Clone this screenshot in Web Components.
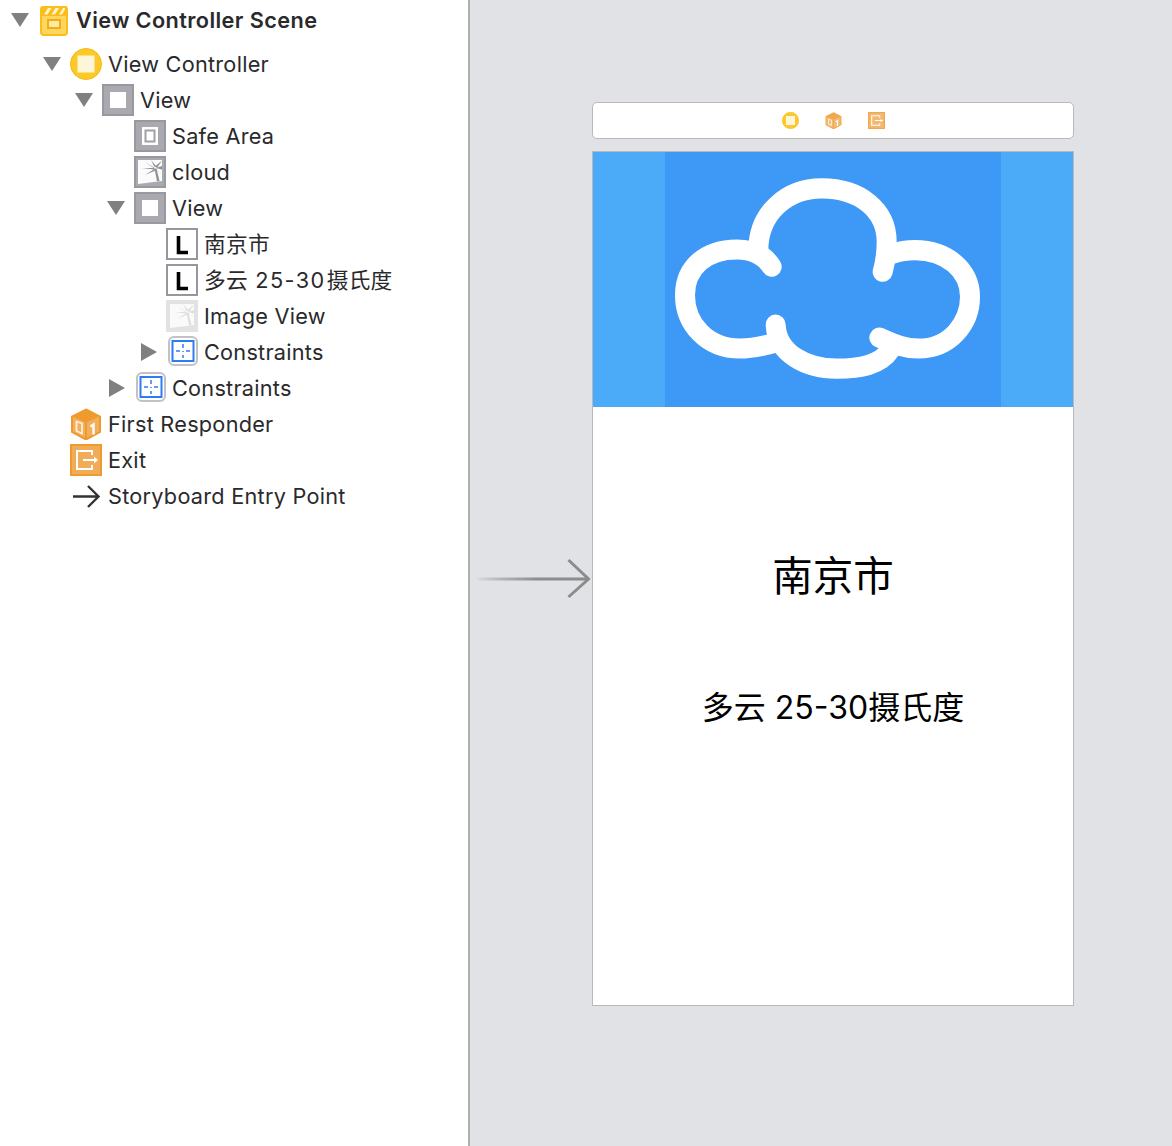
<!DOCTYPE html>
<html lang="zh"><head><meta charset="utf-8"><title>View Controller Scene</title>
<style>
html,body{margin:0;padding:0;background:#fff}
body{font-family:Inter,"Noto Sans CJK SC",sans-serif;color:#2a2a2c}
.d1{letter-spacing:1.45px;margin:0 1px}
</style></head><body>
<storyboard-window>
  <outline-pane slot="outline">
    <tree-row depth="0" open icon="scene" strong>View Controller Scene</tree-row>
    <tree-row depth="1" open icon="vc">View Controller</tree-row>
    <tree-row depth="2" open icon="view">View</tree-row>
    <tree-row depth="3" icon="safe">Safe Area</tree-row>
    <tree-row depth="3" icon="image">cloud</tree-row>
    <tree-row depth="3" open icon="view">View</tree-row>
    <tree-row depth="4" icon="label" cjk>南京市</tree-row>
    <tree-row depth="4" icon="label" cjk>多云 <span class="d1">25-30</span>摄氏度</tree-row>
    <tree-row depth="4" icon="image-light">Image View</tree-row>
    <tree-row depth="4" closed icon="constraints">Constraints</tree-row>
    <tree-row depth="3" closed icon="constraints">Constraints</tree-row>
    <tree-row depth="1" icon="cube">First Responder</tree-row>
    <tree-row depth="1" icon="exit">Exit</tree-row>
    <tree-row depth="1" icon="entry">Storyboard Entry Point</tree-row>
  </outline-pane>
  <scene-canvas slot="canvas">
    <scene-bar></scene-bar>
    <phone-view>
      <cloud-image></cloud-image>
      <phone-label size="40.5" top="146">南京市</phone-label>
      <phone-label size="32" top="83">多云 25-30摄氏度</phone-label>
    </phone-view>
  </scene-canvas>
</storyboard-window>
<script>
const PALM=c=>`<g fill="${c}"><path d="M21 10.500L28 4.500L23 12ZM20.500 11L17 4L22 10ZM20 11.500L11 6L21 13ZM20 12L8 12L20.500 13.500ZM20.500 13L11 19L21.500 14.500ZM22 12L28 10L28 13.500ZM22 13L28 18L23 14Z"/><path d="M20.500 12.500L22.500 12.500L25.500 25L23 25.300Z"/></g>`;
const ICONS={
scene:`<path d="M3 11V28a3 3 0 0 0 3 3H26a3 3 0 0 0 3-3V11Z" fill="#fcd65e" stroke="#fbbd1a" stroke-width="2"/><path d="M2 12V5a3 3 0 0 1 3-3h22a3 3 0 0 1 3 3v7z" fill="#fbbd1a"/><path d="M6 10.500l4-6.500h3.500l-4 6.500zM13.500 10.500l4-6.500h3.500l-4 6.500zM21 10.500l4-6.500h2v1.500l-3 5z" fill="#fff4d0"/><rect x="10" y="16" width="12" height="8" fill="#fdeaa8" stroke="#f4ae10" stroke-width="2"/>`,
vc:`<circle cx="16" cy="16" r="15.500" fill="#fdc926" stroke="#f4b71e" stroke-width="1"/><rect x="7.500" y="7.500" width="17" height="17" fill="#fdf6d8"/>`,
view:`<rect x="1" y="1" width="30" height="30" fill="#a9a9af" stroke="#98989f" stroke-width="2"/><rect x="8" y="8" width="16" height="16" fill="#fff"/>`,
safe:`<rect x="1" y="1" width="30" height="30" fill="#a9a9af" stroke="#98989f" stroke-width="2"/><rect x="8" y="7" width="16" height="18" fill="#fff"/><rect x="11.500" y="10.500" width="9" height="11" fill="none" stroke="#a0a0a6" stroke-width="2"/><rect x="14.500" y="13" width="3" height="6" fill="#fff"/>`,
image:`<rect x="1" y="1" width="30" height="30" fill="#a9a9af" stroke="#98989f" stroke-width="2"/><path d="M4 4H28V25L4 28Z" fill="#fbfbfb"/>${PALM("#8f8f95")}`,
"image-light":`<rect width="32" height="32" fill="#e2e2e2"/><path d="M4 4H28V25L4 28Z" fill="#fafafa"/>${PALM("#dedede")}`,
label:`<rect x="1" y="1" width="30" height="30" fill="#fff" stroke="#96969c" stroke-width="2"/><path d="M12.500 8V24.500H22" fill="none" stroke="#000" stroke-width="3.600"/>`,
constraints:`<rect x="3" y="1" width="28" height="28" rx="5" fill="#fff" stroke="#c2c2c6" stroke-width="2"/><rect x="6.500" y="5" width="21" height="20" fill="#fff" stroke="#2c7cf6" stroke-width="2"/><path d="M17 8v4M17 15v1M17 19v3M10 15h4M20 15h4" stroke="#2c7cf6" stroke-width="1.500"/>`,
cube:`<path d="M16 1.500L30 8.500V24L16 31.500L2 24V8.500Z" fill="#f3ae5c" stroke="#ee9a2d" stroke-width="2"/><path d="M2.500 8.500L16 14.500L29.500 8.500L16 2Z" fill="#ee9a2d"/><path d="M16 14V31" stroke="#ee9a2d" stroke-width="2"/><path d="M6.500 13.500L12 15.500V25.500L6.500 23Z" fill="none" stroke="#fdeeda" stroke-width="1.800"/><path d="M20.500 18.500L23.500 16.500V26.500" fill="none" stroke="#fff" stroke-width="2.400"/>`,
exit:`<rect x="1" y="1" width="30" height="30" fill="#f2ab56" stroke="#ee9a2d" stroke-width="2"/><path d="M22 11V7H7V25H22V21" fill="none" stroke="#fff" stroke-width="2"/><path d="M13 16H27" stroke="#fff" stroke-width="2"/><path d="M24 12.500L28 16L24 19.500Z" fill="#fff"/>`,
entry:`<path d="M3 16.500H28M18 6L28.500 16.500L18 27" fill="none" stroke="#333" stroke-width="2.400"/>`
};
function def(name,css,html,init){
  customElements.define(name,class extends HTMLElement{
    connectedCallback(){
      if(this.shadowRoot)return;
      const r=this.attachShadow({mode:"open"});
      r.innerHTML=`<style>${css}</style>${typeof html==="function"?html(this):html}`;
      if(init)init(this,r);
    }
  });
}
def("xc-icon",":host{display:block;width:var(--s,32px);height:var(--s,32px);flex:none}svg{display:block;width:100%;height:100%}",
  h=>`<svg viewBox="0 0 32 32" aria-hidden="true">${ICONS[h.getAttribute("name")]||""}</svg>`);
def("storyboard-window",":host{display:flex;width:1172px;height:1146px;overflow:hidden}",
  `<slot name="outline"></slot><slot name="canvas"></slot>`);
def("outline-pane",":host{display:block;box-sizing:border-box;width:470px;height:1146px;background:#fff;border-right:2px solid #aeaeae;flex:none}","<slot></slot>");
def("tree-row",`:host{display:flex;align-items:center;height:36px;font-size:21.700px;letter-spacing:.25px;white-space:nowrap;color:#2a2a2c}
:host([strong]){height:40px;margin-bottom:6px;font-weight:600;letter-spacing:.4px}
.tw{width:27px;flex:none;display:flex}
.tw svg{display:block}
.t{margin-left:6px}
:host([cjk]) .t{padding-bottom:4px}`,
 h=>{
  const d=+h.getAttribute("depth");
  const tri=h.hasAttribute("open")?`<svg width="18" height="14" viewBox="0 0 18 14"><path d="M0 0H18L9 14Z" fill="#808080"/></svg>`
    :h.hasAttribute("closed")?`<svg width="16" height="18" style="margin-left:2px" viewBox="0 0 16 18"><path d="M0 0L16 9L0 18Z" fill="#808080"/></svg>`:"";
  return `<style>:host{padding-left:${11+32*d}px}</style><span class="tw">${tri}</span><xc-icon name="${h.getAttribute("icon")}"></xc-icon><span class="t"><slot></slot></span>`;
 });
def("scene-canvas",`:host{display:block;position:relative;flex:1;background:#e1e2e6;box-sizing:border-box;padding:102px 98px 0 122px}
.arrow{position:absolute;left:6px;top:558px}`,
 `<slot></slot><svg class="arrow" width="116" height="42" viewBox="0 0 116 42"><defs><linearGradient id="g" x1="0" x2="1" y1="0" y2="0"><stop offset="0" stop-color="#8c8c8c" stop-opacity=".08"/><stop offset=".2" stop-color="#8c8c8c" stop-opacity=".5"/><stop offset=".55" stop-color="#8c8c8c"/><stop offset="1" stop-color="#8c8c8c"/></linearGradient></defs><rect x="1" y="19.500" width="111" height="3" fill="url(#g)"/><path d="M92.500 2L112.500 21L92.500 39" fill="none" stroke="#8c8c8c" stroke-width="3"/></svg>`);
def("scene-bar",`:host{display:flex;justify-content:center;align-items:center;gap:26px;box-sizing:border-box;height:37px;width:482px;background:#fff;border:1px solid #b9b9b9;border-radius:5px;margin-bottom:12px;padding-left:1px}
xc-icon{--s:17px}
.c{opacity:.85}`,
 `<xc-icon name="vc"></xc-icon><xc-icon class="c" name="cube"></xc-icon><xc-icon class="c" name="exit"></xc-icon>`);
def("phone-view",":host{display:block;box-sizing:border-box;width:482px;height:855px;background:#fff;border:1px solid #b9b9b9}","<slot></slot>");
def("cloud-image",`:host{display:flex;justify-content:center;height:255px;background:#4babf9}
svg{display:block;width:336px;height:255px;background:#3e98f5}`,
 `<svg viewBox="255 186 1008 764" preserveAspectRatio="none" fill="none" stroke="#fff" stroke-width="60" stroke-linecap="round">
 <path d="M575 530C550 490 510 478 470 478C380 478 315 530 315 615C315 700 380 775 480 775C520 775 560 765 595 755"/>
 <path d="M587 703C590 790 680 835 770 835C840 835 900 825 930 780"/>
 <path d="M898 742C940 760 970 775 1015 775C1110 775 1170 700 1170 620C1170 540 1100 480 1005 480C980 480 960 483 940 490"/>
 <path d="M908 545C915 520 920 490 920 455C920 360 840 295 725 295C620 295 535 370 535 480"/>
 </svg>`);
def("phone-label",`:host{display:block;text-align:center;color:#000;white-space:nowrap;line-height:48px;height:48px}`,
 h=>`<style>:host{font-size:${h.getAttribute("size")}px;margin-top:${h.getAttribute("top")}px}</style><slot></slot>`);
</script>
</body></html>
